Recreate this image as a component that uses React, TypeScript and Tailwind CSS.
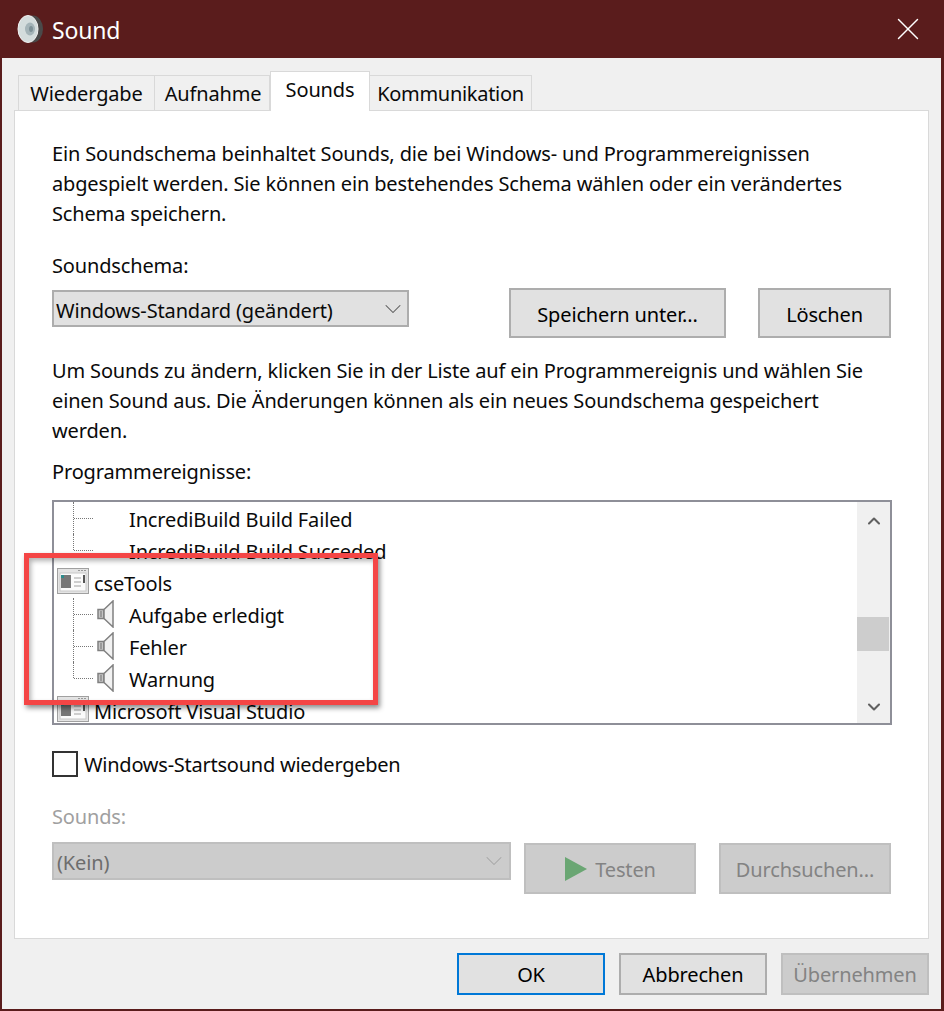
import { ChevronDown, ChevronUp, X } from "lucide-react";

const font = "[font-family:'Noto_Sans','Open_Sans',sans-serif]";

function Speaker() {
  return (
    <svg width="18" height="28" viewBox="0 0 18 28" className="shrink-0">
      <path d="M1 9.5h6v9H1z" fill="#c4c4c4" stroke="#808080" strokeWidth="1.5" />
      <path d="M7 9.5 16 1v26l-9-8.5z" fill="#f2f2f2" stroke="#808080" strokeWidth="1.5" />
      <path d="M3 11h2v6H3z" fill="#9a9a9a" />
    </svg>
  );
}

function AppIcon() {
  return (
    <svg width="32" height="26" viewBox="0 0 32 26" className="shrink-0 -mt-[2px]">
      <rect x="0.5" y="0.5" width="31" height="25" fill="#e4e4e4" stroke="#a0a0a0" />
      <path d="M21 2.5h2M24 2.5h2M27 2.5h2" stroke="#999" />
      <rect x="3" y="5" width="26" height="18" fill="#fbfbfb" stroke="#c8c8c8" />
      <rect x="4" y="7" width="10" height="13" fill="#777" />
      <rect x="4" y="7" width="3" height="3" fill="#2c8c8c" />
      <path d="M17 10h7M17 14h7M17 18h7" stroke="#c0c0c0" strokeWidth="1.5" />
      <rect x="26" y="7" width="2" height="8" fill="#555" />
    </svg>
  );
}

function TreeRow({ label, last, icon = true }: { label: string; last?: boolean; icon?: boolean }) {
  return (
    <div className="flex items-center h-8 relative">
      <span className={`absolute left-[19px] top-0 border-l border-dotted border-[#777] ${last ? "h-4" : "h-8"}`} />
      <span className="ml-[20px] w-[19px] border-t border-dotted border-[#777]" />
      <span className="ml-[4px] w-[32px] h-7 shrink-0">{icon && <Speaker />}</span>
      <span className="pt-[4px]">{label}</span>
    </div>
  );
}

function GroupRow({ label }: { label: string }) {
  return (
    <div className="flex items-center h-8 gap-[5px] ml-[3px]">
      <AppIcon />
      <span className="pt-[4px]">{label}</span>
    </div>
  );
}

function Btn({ children, w, h, disabled, className = "" }: { children: React.ReactNode; w: string; h: string; disabled?: boolean; className?: string }) {
  return (
    <div
      className={`${w} ${h} flex items-center justify-center border-2 pt-[2px] ${
        disabled ? "bg-[#cccccc] border-[#bfbfbf] text-[#838383]" : "bg-[#e1e1e1] border-[#adadad] text-black"
      } ${className}`}
    >
      {children}
    </div>
  );
}

export default function App() {
  return (
    <div className={`w-[944px] h-[1011px] bg-[#5a1c1c] flex flex-col relative overflow-hidden text-[20px] leading-[30px] text-[#0a0a0a] tracking-[-0.15px] ${font}`}>
      {/* title bar */}
      <div className="h-[58px] flex items-center pl-[17px] pr-[17px] text-white shrink-0">
        <svg width="27" height="30" viewBox="0 0 27 30" className="shrink-0 mr-[8px]">
          <ellipse cx="16" cy="15" rx="10" ry="13.5" fill="#4a4a4a" />
          <ellipse cx="11" cy="15" rx="10" ry="13.5" fill="#d3dcdc" stroke="#f0f0f0" />
          <ellipse cx="13" cy="15" rx="5" ry="6.5" fill="#a4b4b8" />
          <ellipse cx="14" cy="15" rx="2" ry="3" fill="#7d9096" />
        </svg>
        <span className="text-[23px] pt-[2px]">Sound</span>
        <X className="ml-auto text-white" size={38} strokeWidth={0.9} />
      </div>

      {/* client area */}
      <div className="mx-[2px] w-[939px] h-[951px] bg-[#f0f0f0] flex flex-col shrink-0">
        {/* tabs */}
        <div className="h-[52px] pl-[16px] flex items-end shrink-0 relative z-10">
          <div className="w-[137px] h-[36px] -mb-px border border-[#d9d9d9] flex items-center justify-center pt-[1px]">Wiedergabe</div>
          <div className="w-[115px] h-[36px] -mb-px border border-l-0 border-[#d9d9d9] flex items-center justify-center pt-[1px] pl-[2px]">Aufnahme</div>
          <div className="w-[100px] h-[40px] -mb-px border border-b-0 border-[#d9d9d9] bg-white flex items-center justify-center pb-[3px]">Sounds</div>
          <div className="w-[162px] h-[36px] -mb-px border border-l-0 border-[#d9d9d9] flex items-center justify-center pt-[1px] tracking-[-0.3px]">Kommunikation</div>
        </div>

        {/* page */}
        <div className="ml-[12px] w-[915px] h-[829px] bg-white border border-[#d9d9d9] pl-[37px] pt-[28px] flex flex-col shrink-0">
          <p>
            Ein Soundschema beinhaltet Sounds, die bei Windows- und Programmereignissen
            <br />
            abgespielt werden. Sie können ein bestehendes Schema wählen oder ein verändertes
            <br />
            Schema speichern.
          </p>
          <div className="mt-[22px]">Soundschema:</div>
          <div className="flex mt-[7px] h-[50px]">
            <div className="w-[357px] h-[37px] mt-[2px] bg-[#e1e1e1] border-2 border-[#adadad] flex items-center pl-[2px]">
              <span className="pt-[4px]">Windows-Standard (geändert)</span>
              <ChevronDown className="ml-auto text-[#555]" size={28} strokeWidth={0.9} />
            </div>
            <Btn w="w-[217px]" h="h-[50px]" className="ml-[100px] !pt-[4px]">Speichern unter...</Btn>
            <Btn w="w-[133px]" h="h-[50px]" className="ml-[32px] !pt-[4px]">Löschen</Btn>
          </div>
          <p className="mt-[18px]">
            Um Sounds zu ändern, klicken Sie in der Liste auf ein Programmereignis und wählen Sie
            <br />
            einen Sound aus. Die Änderungen können als ein neues Soundschema gespeichert
            <br />
            werden.
          </p>
          <div className="mt-[11px]">Programmereignisse:</div>

          {/* event list */}
          <div className="mt-[13px] w-[840px] h-[225px] border-2 border-[#8e8f98] flex overflow-hidden shrink-0">
            <div className="flex-1 overflow-hidden">
              <TreeRow label="IncrediBuild Build Failed" icon={false} />
              <TreeRow label="IncrediBuild Build Succeded" icon={false} last />
              <GroupRow label="cseTools" />
              <TreeRow label="Aufgabe erledigt" />
              <TreeRow label="Fehler" />
              <TreeRow label="Warnung" last />
              <GroupRow label="Microsoft Visual Studio" />
            </div>
            <div className="w-[33px] bg-[#f0f0f0] flex flex-col items-center">
              <ChevronUp className="mt-[9px] text-[#606060]" size={20} strokeWidth={2.5} />
              <div className="w-[32px] h-[34px] bg-[#cdcdcd] mt-[86px] self-start" />
              <ChevronDown className="mt-[46px] text-[#606060]" size={20} strokeWidth={2.5} />
            </div>
          </div>

          <div className="flex items-center mt-[26px] h-[26px]">
            <div className="w-[26px] h-[26px] border-2 border-[#333] bg-white" />
            <span className="ml-[6px] pt-[1px] tracking-[-0.25px]">Windows-Startsound wiedergeben</span>
          </div>

          <div className="mt-[25px] text-[#a0a0a0]">Sounds:</div>
          <div className="flex mt-[10px]">
            <div className="w-[459px] h-[38px] bg-[#cccccc] border-2 border-[#bfbfbf] flex items-center pl-[3px] pr-[1px] text-[#6d6d6d]">
              <span className="pt-[4px]">(Kein)</span>
              <ChevronDown className="ml-auto text-[#a6a6a6]" size={28} strokeWidth={0.9} />
            </div>
            <Btn w="w-[172px]" h="h-[51px]" disabled className="ml-[13px] mt-px gap-[7px]">
              <svg width="24" height="24" viewBox="0 0 24 24" className="-mt-[2px]">
                <path d="M1 0 23 12 1 24z" fill="#6aa673" />
              </svg>
              <span>Testen</span>
            </Btn>
            <Btn w="w-[172px]" h="h-[51px]" disabled className="ml-[23px] mt-px">Durchsuchen...</Btn>
          </div>
        </div>

        {/* footer */}
        <div className="flex mt-[14px] ml-[455px]">
          <Btn w="w-[148px]" h="h-[42px]" className="!border-[#0078d7]">OK</Btn>
          <Btn w="w-[148px]" h="h-[42px]" className="ml-[14px]">Abbrechen</Btn>
          <Btn w="w-[148px]" h="h-[42px]" disabled className="ml-[14px]">Übernehmen</Btn>
        </div>
      </div>

      {/* annotation */}
      <div className="absolute left-[24px] top-[553px] w-[354px] h-[152px] border-[5px] border-[#f44545] shadow-[2px_3px_5px_rgba(0,0,0,0.45),inset_2px_3px_5px_rgba(0,0,0,0.3)]" />
    </div>
  );
}
